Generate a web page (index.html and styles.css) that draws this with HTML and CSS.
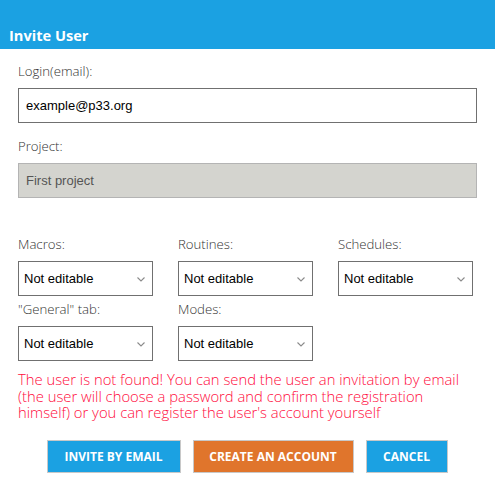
FILE: index.html
```html
<!DOCTYPE html>
<html>
<head>
<meta charset="utf-8">
<link rel="stylesheet" href="styles.css">
</head>
<body>
<div class="dialog">
  <div class="header"><span class="title">Invite User</span></div>
  <div class="form">
    <div class="label first">Login(email):</div>
    <div class="input">example@p33.org</div>
    <div class="label">Project:</div>
    <div class="input disabled">First project</div>
    <div class="grid">
      <div class="cell">
        <div class="label">Macros:</div>
        <div class="select"><span>Not editable</span><svg width="8" height="5" viewBox="0 0 8 5"><path d="M0.5 0.5l3.5 3.5 3.5-3.5" fill="none" stroke="#8a8a8a" stroke-width="1.1"/></svg></div>
      </div>
      <div class="cell">
        <div class="label">Routines:</div>
        <div class="select"><span>Not editable</span><svg width="8" height="5" viewBox="0 0 8 5"><path d="M0.5 0.5l3.5 3.5 3.5-3.5" fill="none" stroke="#8a8a8a" stroke-width="1.1"/></svg></div>
      </div>
      <div class="cell">
        <div class="label">Schedules:</div>
        <div class="select"><span>Not editable</span><svg width="8" height="5" viewBox="0 0 8 5"><path d="M0.5 0.5l3.5 3.5 3.5-3.5" fill="none" stroke="#8a8a8a" stroke-width="1.1"/></svg></div>
      </div>
      <div class="cell">
        <div class="label row2">"General" tab:</div>
        <div class="select"><span>Not editable</span><svg width="8" height="5" viewBox="0 0 8 5"><path d="M0.5 0.5l3.5 3.5 3.5-3.5" fill="none" stroke="#8a8a8a" stroke-width="1.1"/></svg></div>
      </div>
      <div class="cell">
        <div class="label row2">Modes:</div>
        <div class="select"><span>Not editable</span><svg width="8" height="5" viewBox="0 0 8 5"><path d="M0.5 0.5l3.5 3.5 3.5-3.5" fill="none" stroke="#8a8a8a" stroke-width="1.1"/></svg></div>
      </div>
    </div>
    <div class="error">The user is not found! You can send the user an invitation by email (the user will choose a password and confirm the registration himself) or you can register the user's account yourself</div>
    <div class="buttons">
      <button class="btn blue">INVITE BY EMAIL</button>
      <button class="btn orange">CREATE AN ACCOUNT</button>
      <button class="btn blue cancel">CANCEL</button>
    </div>
  </div>
</div>
</body>
</html>
```
FILE: styles.css
```css
* { box-sizing: border-box; }
body { margin: 0; background: #fff; font-family: "Open Sans", sans-serif; }
.dialog { width: 495px; height: 482px; }
.header { height: 49px; background: #1ba1e2; display: flex; align-items: flex-end; padding: 0 0 4px 9px; }
.title { color: #fff; font-weight: 700; font-size: 14.6px; line-height: 20px; }
.form { padding: 0 18px; }
.label { font-weight: 300; font-size: 13.2px; line-height: 20px; color: #333; margin-top: 13px; margin-bottom: 7px; }
.label.first { margin-top: 12px; }
.input { height: 35px; border: 1px solid #707070; padding: 0 7px; display: flex; align-items: center; font-family: "Liberation Sans", Arial, sans-serif; font-size: 13px; color: #000; width: 459px; }
.input.disabled { background: #d4d4cf; border: 1px solid #b4b4b4; color: #555; }
.grid { display: grid; grid-template-columns: 135px 135px 135px; column-gap: 25px; margin-top: 36px; }
.grid .label { margin-top: 0; }
.grid .label.row2 { margin-top: 3px; }
.select { height: 35px; border: 1px solid #707070; padding: 0 7px 0 5px; display: flex; align-items: center; justify-content: space-between; font-family: "Liberation Sans", Arial, sans-serif; font-size: 13px; color: #000; }
.select svg { margin-top: 2px; }
.error { margin-top: 10px; font-weight: 300; font-size: 14.8px; line-height: 16.5px; color: #ff0a3c; width: 460px; }
.buttons { display: flex; justify-content: center; gap: 12px; margin-top: 19px; padding-right: 1px; }
.btn { height: 33px; border: 1px solid #c8c8c8; color: #fff; font-family: "Open Sans", sans-serif; font-weight: 700; font-size: 12px; padding: 0; cursor: pointer; }
.btn.blue { background: #1ba1e2; width: 134px; }
.btn.orange { background: #e0752c; width: 161px; }
.btn.cancel { width: 82px; }
```
